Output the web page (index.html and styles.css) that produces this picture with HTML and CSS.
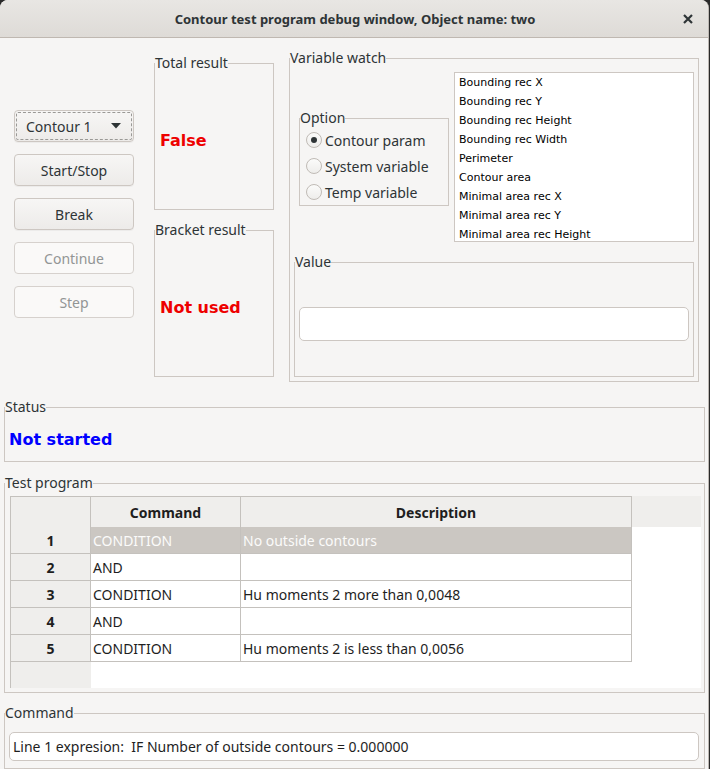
FILE: index.html
```html
<!DOCTYPE html>
<html>
<head>
<meta charset="utf-8">
<link rel="stylesheet" href="styles.css">
</head>
<body>
<div class="window">
  <div class="titlebar">
    <span class="title">Contour test program debug window, Object name: two</span>
    <svg class="close" width="10" height="10" viewBox="0 0 10 10"><path d="M1 1 L9 9 M9 1 L1 9" stroke="#2e3436" stroke-width="2.2" fill="none"/></svg>
  </div>
  <div class="body">
    <div class="top">
      <div class="buttons">
        <div class="btn combo"><span>Contour 1</span><svg width="10" height="6" viewBox="0 0 10 6"><path d="M0 0 H10 L5 5.5 Z" fill="#2e3436"/></svg></div>
        <div class="btn">Start/Stop</div>
        <div class="btn">Break</div>
        <div class="btn disabled">Continue</div>
        <div class="btn disabled">Step</div>
      </div>
      <div class="results">
        <fieldset class="group result">
          <legend>Total result</legend>
          <div class="gb result-body"><div class="result-text">False</div></div>
        </fieldset>
        <fieldset class="group result">
          <legend>Bracket result</legend>
          <div class="gb result-body"><div class="result-text">Not used</div></div>
        </fieldset>
      </div>
      <fieldset class="group watch">
        <legend>Variable watch</legend>
        <div class="gb watch-body">
          <div class="watch-row">
            <fieldset class="group option">
              <legend>Option</legend>
              <div class="gb option-body">
                <div class="radio checked"><span class="dot"></span>Contour param</div>
                <div class="radio"><span class="dot"></span>System variable</div>
                <div class="radio"><span class="dot"></span>Temp variable</div>
              </div>
            </fieldset>
            <div class="list">
              <div class="item">Bounding rec X</div>
              <div class="item">Bounding rec Y</div>
              <div class="item">Bounding rec Height</div>
              <div class="item">Bounding rec Width</div>
              <div class="item">Perimeter</div>
              <div class="item">Contour area</div>
              <div class="item">Minimal area rec X</div>
              <div class="item">Minimal area rec Y</div>
              <div class="item">Minimal area rec Height</div>
            </div>
          </div>
          <fieldset class="group value">
            <legend>Value</legend>
            <div class="gb value-body"><div class="input value-input"></div></div>
          </fieldset>
        </div>
      </fieldset>
    </div>

    <fieldset class="group status">
      <legend>Status</legend>
      <div class="gb status-body"><div class="status-text">Not started</div></div>
    </fieldset>

    <fieldset class="group program">
      <legend>Test program</legend>
      <div class="gb program-body">
        <div class="table">
          <div class="hc corner"></div>
          <div class="hc">Command</div>
          <div class="hc">Description</div>
          <div class="hc filler"></div>

          <div class="rh">1</div>
          <div class="cell sel">CONDITION</div>
          <div class="cell sel">No outside contours</div>
          <div class="empty"></div>

          <div class="rh">2</div>
          <div class="cell">AND</div>
          <div class="cell"></div>
          <div class="empty"></div>

          <div class="rh">3</div>
          <div class="cell">CONDITION</div>
          <div class="cell">Hu moments 2 more than 0,0048</div>
          <div class="empty"></div>

          <div class="rh">4</div>
          <div class="cell">AND</div>
          <div class="cell"></div>
          <div class="empty"></div>

          <div class="rh">5</div>
          <div class="cell">CONDITION</div>
          <div class="cell">Hu moments 2 is less than 0,0056</div>
          <div class="empty"></div>

          <div class="rh blank"></div>
          <div class="empty span3"></div>
        </div>
      </div>
    </fieldset>

    <fieldset class="group command">
      <legend>Command</legend>
      <div class="gb command-body">
        <div class="input command-input">Line 1 expresion:&nbsp; IF Number of outside contours = 0.000000</div>
      </div>
    </fieldset>
  </div>
</div>
</body>
</html>
```

FILE: styles.css
```css
html, body {
  margin: 0;
  padding: 0;
  background: #2a2a2a;
}
* { box-sizing: border-box; }

.window {
  width: 709px;
  height: 769px;
  background: #f6f5f4;
  border-radius: 8px 8px 0 0;
  overflow: hidden;
  font-family: "Noto Sans", "DejaVu Sans", sans-serif;
  font-size: 14px;
  color: #2e3436;
  border-right: 1px solid #bdb8b3;
}

.titlebar {
  height: 38px;
  background: linear-gradient(#e8e6e3, #dedbd7);
  border-bottom: 1px solid #bfb8b1;
  display: flex;
  align-items: center;
  justify-content: center;
  position: relative;
}
.title {
  font-weight: bold;
  font-size: 13px;
  color: #2e3436;
  margin-left: 2px;
}
.close {
  position: absolute;
  right: 15px;
  top: 14px;
}

.body {
  display: flex;
  flex-direction: column;
}

.top {
  display: flex;
  height: 347px;
}

.buttons {
  margin-left: 14px;
  width: 120px;
  padding-top: 72px;
  display: flex;
  flex-direction: column;
  gap: 12px;
}
.btn {
  height: 32px;
  border: 1px solid #cdc7c2;
  border-radius: 4px;
  background: linear-gradient(#f7f6f5, #edebe9);
  display: flex;
  align-items: center;
  justify-content: center;
  color: #2e3436;
  box-shadow: 0 1px 0 rgba(0,0,0,0.04);
}
.btn.disabled {
  background: #faf9f8;
  color: #929595;
  border-color: #d6d1cd;
  box-shadow: none;
}
.combo {
  justify-content: space-between;
  padding: 0 12px 0 11px;
  outline: 1px dashed #9a9996;
  outline-offset: -3px;
}

.group {
  margin: 0;
  padding: 0;
  min-width: 0;
  border: 1px solid #cdc7c2;
}
.group > legend {
  padding: 0;
  margin-left: 0;
  line-height: 16px;
  font-size: 14px;
  color: #2e3436;
}

.results {
  margin-left: 20px;
  width: 120px;
  padding-top: 17px;
  display: flex;
  flex-direction: column;
  gap: 12px;
}
.result {
  height: 155px;
}
.result-body {
  padding: 60px 0 0 5px;
}
.result-text {
  font-family: "DejaVu Sans", sans-serif;
  font-weight: bold;
  font-size: 16px;
  line-height: 20px;
  color: #ee0000;
}

.watch {
  margin-left: 15px;
  margin-top: 12px;
  width: 410px;
  height: 332px;
}
.watch-body {
  padding: 0 4px 4px 4px;
}
.watch-row {
  display: flex;
  height: 176px;
}
.option {
  margin-left: 5px;
  margin-top: 44px;
  width: 150px;
  height: 96px;
}
.option-body {
  padding: 1px 0 0 6px;
}
.radio {
  height: 26px;
  display: flex;
  align-items: center;
  gap: 3px;
  color: #2e3436;
}
.dot {
  width: 16px;
  height: 16px;
  border-radius: 50%;
  border: 1px solid #c0bbb6;
  background: linear-gradient(#fbfbfa, #eeedeb);
  display: flex;
  align-items: center;
  justify-content: center;
}
.radio.checked .dot::after {
  content: "";
  width: 6px;
  height: 6px;
  border-radius: 50%;
  background: #2e3436;
}

.list {
  margin-left: 5px;
  margin-top: 6px;
  width: 240px;
  height: 170px;
  background: #fff;
  border: 1px solid #cdc7c2;
  padding: 0 0 0 4px;
  font-family: "DejaVu Sans", sans-serif;
  font-size: 11px;
  color: #000;
}
.item {
  height: 19px;
  line-height: 19px;
}

.value {
  margin-top: 12px;
  height: 123px;
}
.value-body {
  padding: 0 5px 0 4px;
}
.input {
  background: #fff;
  border: 1px solid #cdc7c2;
  border-radius: 5px;
}
.value-input {
  margin-top: 37px;
  height: 34px;
  width: 390px;
}

.status {
  margin: 14px 0 0 4px;
  width: 701px;
  height: 63px;
}
.status-body {
  padding: 15px 0 0 4px;
}
.status-text {
  font-family: "DejaVu Sans", sans-serif;
  font-weight: bold;
  font-size: 16px;
  color: #0000ff;
  line-height: 20px;
}

.program {
  margin: 13px 0 0 4px;
  width: 701px;
  height: 218px;
}
.program-body {
  padding: 5px 0 0 5px;
}
.table {
  width: 691px;
  height: 192px;
  display: grid;
  grid-template-columns: 81px 150px 391px 1fr;
  grid-template-rows: 31px repeat(5, 27px) 1fr;
  background: #fff;
  color: #1e1e1e;
}
.hc {
  background: #efeeec;
  border-top: 1px solid #c4c1bd;
  border-right: 1px solid #c4c1bd;
  display: flex;
  align-items: center;
  justify-content: center;
  font-weight: bold;
  color: #1e1e1e;
}
.hc.corner {
  border-left: 1px solid #c4c1bd;
}
.hc.filler {
  border: none;
}
.rh {
  background: #efeeec;
  border-left: 1px solid #c4c1bd;
  border-right: 1px solid #c4c1bd;
  border-bottom: 1px solid #c4c1bd;
  display: flex;
  align-items: center;
  justify-content: center;
  font-weight: bold;
}
.rh.blank {
  border-bottom: none;
  border-right: none;
}
.cell {
  border-right: 1px solid #c4c1bd;
  border-bottom: 1px solid #c4c1bd;
  display: flex;
  align-items: center;
  padding-left: 2px;
  white-space: nowrap;
}
.cell.sel {
  background: #cbc7c2;
  color: #fbfbfa;
}
.span3 {
  grid-column: span 3;
}

.command {
  margin: 12px 0 0 4px;
  width: 701px;
  height: 64px;
}
.command-body {
  padding: 11px 0 0 4px;
}
.command-input {
  width: 690px;
  height: 29px;
  display: flex;
  align-items: center;
  padding-left: 3px;
  color: #1e1e1e;
}
```
